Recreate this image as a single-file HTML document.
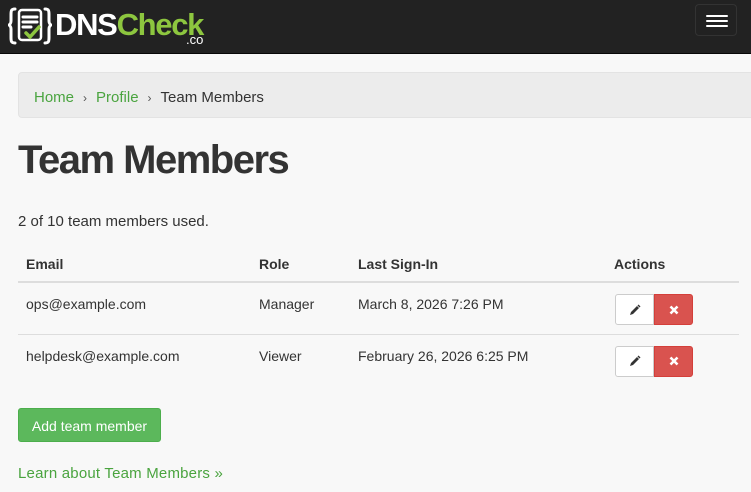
<!DOCTYPE html>
<html><head><style>
body{margin:0;width:751px;height:492px;overflow:hidden;background:#f8f8f8;font-family:"Liberation Sans",Helvetica,Arial,sans-serif;color:#333;font-size:14px}
.nav{height:53px;background:#222;border-bottom:1px solid #080808;position:relative}
.tog{position:absolute;left:695px;top:4px;width:42px;height:32px;border:1px solid #333;border-radius:4px;box-sizing:border-box}
.tog i{display:block;position:absolute;left:10px;width:22px;height:2px;background:#fff;border-radius:1px}
.bc{position:absolute;left:18px;top:72px;width:745px;height:46px;background:#ececec;border:1px solid #e3e3e3;border-radius:4px;box-sizing:border-box;font-size:15px;line-height:50px;padding-left:15px}
.bc a{color:#4aa43f;text-decoration:none}
.bc .s{color:#555;padding:0 9px;font-size:12px}
h1{position:absolute;left:18px;top:138px;margin:0;font-size:40px;font-weight:bold;letter-spacing:-1.5px;color:#333;line-height:44px}
.used{position:absolute;left:18px;top:213px;font-size:15px}
table{position:absolute;left:18px;top:246px;width:721px;border-collapse:collapse;font-size:14px}
th{text-align:left;height:35px;padding:0 8px;border-bottom:2px solid #ddd;font-weight:bold}
td{height:52px;padding:0 8px;border-bottom:1px solid #ddd;vertical-align:top;padding-top:13px;box-sizing:border-box}
tr.last td{border-bottom:none}
.bg{display:flex;margin-top:-2px;margin-left:1px}
.b1,.b2{width:39px;height:31px;box-sizing:border-box;display:flex;align-items:center;justify-content:center}
.b1{background:#fff;border:1px solid #ccc;border-radius:3px 0 0 3px}
.b2{background:#d9534f;border:1px solid #d43f3a;border-radius:0 3px 3px 0}
.add{position:absolute;left:18px;top:408px;width:143px;height:34px;background:#5cb85c;border:1px solid #4cae4c;border-radius:3px;box-sizing:border-box;color:#fff;font-size:14px;text-align:center;line-height:34px}
.learn{position:absolute;left:18px;top:465px;font-size:15px;color:#4aa43f;letter-spacing:0.2px}
</style></head><body>
<div class="nav">
<svg style="position:absolute;left:8px;top:6px" width="44" height="40" viewBox="0 0 44 40"><g fill="none" stroke="#fff" stroke-width="3" stroke-linecap="round"><path d="M7 3c-4 0-4 2-4 6v6c0 3-2 4-2 4s2 1 2 4v8c0 4 0 6 4 6"/><path d="M37 3c4 0 4 2 4 6v6c0 3 2 4 2 4s-2 1-2 4v8c0 4 0 6-4 6"/><rect x="11" y="4" width="22" height="30" rx="3" stroke-width="2.5"/><path d="M15 11h14M15 16h14M15 21h8"/></g><path d="M18 27l4 4 9-10" fill="none" stroke="#8dc63f" stroke-width="3.5" stroke-linecap="round"/></svg>
<div style="position:absolute;left:55px;top:7px;font-size:31px;font-weight:bold;letter-spacing:-1.3px;color:#fff">DNS<span style="color:#8dc63f">Check</span></div>
<div style="position:absolute;left:186px;top:32px;font-size:13px;color:#fff">.co</div>
<div class="tog"><i style="top:10px"></i><i style="top:15px"></i><i style="top:20px"></i></div>
</div>
<div class="bc"><a>Home</a><span class="s">›</span><a>Profile</a><span class="s">›</span>Team Members</div>
<h1>Team Members</h1>
<div class="used">2 of 10 team members used.</div>
<table>
<tr><th style="width:217px">Email</th><th style="width:83px">Role</th><th style="width:240px">Last Sign-In</th><th>Actions</th></tr>
<tr><td>ops@example.com</td><td>Manager</td><td>March 8, 2026 7:26 PM</td><td><div class="bg"><div class="b1"><svg width="12" height="12" viewBox="0 0 12 12"><path d="M1 11l1-3 6-6 2 2-6 6z M8.5 1.5l1-1 2 2-1 1z" fill="#333"/></svg></div><div class="b2"><svg width="10" height="10" viewBox="0 0 10 10"><path d="M1.5 1.5l7 7M8.5 1.5l-7 7" stroke="#fff" stroke-width="2.6"/></svg></div></div></td></tr>
<tr class="last"><td>helpdesk@example.com</td><td>Viewer</td><td>February 26, 2026 6:25 PM</td><td><div class="bg"><div class="b1"><svg width="12" height="12" viewBox="0 0 12 12"><path d="M1 11l1-3 6-6 2 2-6 6z M8.5 1.5l1-1 2 2-1 1z" fill="#333"/></svg></div><div class="b2"><svg width="10" height="10" viewBox="0 0 10 10"><path d="M1.5 1.5l7 7M8.5 1.5l-7 7" stroke="#fff" stroke-width="2.6"/></svg></div></div></td></tr>
</table>
<div class="add">Add team member</div>
<div class="learn">Learn about Team Members »</div>
</body></html>
